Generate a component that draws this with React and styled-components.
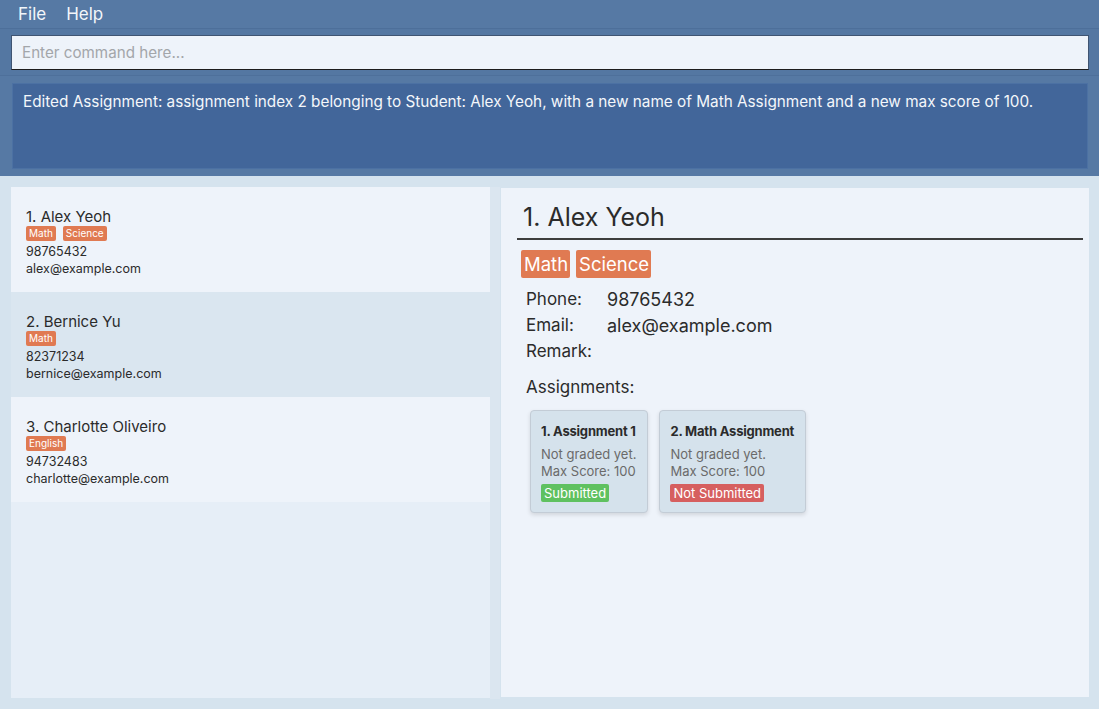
import React from 'react';
import styled, { createGlobalStyle } from 'styled-components';

const GlobalStyle = createGlobalStyle`
    html, body {
        margin: 0;
        padding: 0;
        background: #d5e3ee;
        font-family: Inter, "Noto Sans", sans-serif;
        color: #2b2b2b;
    }
`;

const Window = styled.div`
    width: 1099px;
    height: 709px;
    display: flex;
    flex-direction: column;
    background: #d5e3ee;
    overflow: hidden;
`;

const MenuBar = styled.div`
    height: 29px;
    display: flex;
    align-items: center;
    gap: 20px;
    padding-left: 18px;
    background: #5679a4;
    border-bottom: 1px solid #4d6f9a;
    box-sizing: border-box;
`;

const MenuItem = styled.span`
    color: #f2f6fa;
    font-size: 17px;
`;

const CommandSection = styled.div`
    height: 47px;
    padding: 6px 10px 6px 11px;
    box-sizing: border-box;
    background: #5477a2;
    border-bottom: 1px solid #4e709b;
`;

const CommandInput = styled.input`
    width: 100%;
    height: 35px;
    box-sizing: border-box;
    background: #eef3fa;
    border: 1px solid #3f5472;
    border-bottom-color: #1c1c1c;
    padding: 0 10px;
    font-family: Inter, "Noto Sans", sans-serif;
    font-size: 15.2px;
    color: #2b2b2b;
    outline: none;
    &::placeholder {
        color: #a3a6aa;
    }
`;

const ResultSection = styled.div`
    height: 100px;
    padding: 7px 11px 7px 12px;
    box-sizing: border-box;
    background: #5679a4;
`;

const ResultBox = styled.div`
    height: 86px;
    box-sizing: border-box;
    background: #42669a;
    border: 1px solid #4c71a3;
    padding: 7px 10px;
    color: #f4f7fb;
    font-size: 15.3px;
    line-height: 22px;
`;

const Main = styled.div`
    flex: 1;
    display: flex;
    padding: 11px 10px 10px 11px;
    min-height: 0;
`;

const ListPanel = styled.div`
    width: 479px;
    background: #e6eef7;
    display: flex;
    flex-direction: column;
    margin-bottom: 1px;
`;

const Divider = styled.div`
    width: 10px;
    background: #dbe6f0;
`;

const DetailPanel = styled.div`
    flex: 1;
    background: #eef3fa;
    margin: 1px 0 2px 1px;
    padding: 9px 6px 0 16px;
`;

const Cell = styled.div`
    height: 105px;
    box-sizing: border-box;
    padding: 20px 15px 0;
    background: ${p => (p.$alt ? '#dae6f0' : '#eef3fa')};
`;

const CellName = styled.div`
    font-size: 15px;
    line-height: 19px;
    color: #2b2b2b;
`;

const TagRow = styled.div`
    display: flex;
    gap: ${p => (p.$large ? '6px' : '7px')};
    margin: ${p => (p.$large ? '0 0 0 4px' : '0 0 2px')};
`;

const Tag = styled.span`
    background: #e07a52;
    color: #fff;
    border-radius: 2px;
    font-size: ${p => (p.$large ? '18.5px' : '10px')};
    line-height: ${p => (p.$large ? '28px' : '15px')};
    padding: ${p => (p.$large ? '0 2px 0 3px' : '0 3px')};
`;

const CellLine = styled.div`
    font-size: 12.5px;
    line-height: 17px;
    color: #2b2b2b;
`;

const Title = styled.div`
    font-size: 25px;
    line-height: 40px;
    padding-left: 6px;
    border-bottom: 2px solid #3d3d3d;
    height: 43px;
    box-sizing: border-box;
`;

const Tags = styled.div`
    margin-top: 10px;
`;

const InfoGrid = styled.div`
    display: grid;
    grid-template-columns: 81px auto;
    grid-auto-rows: 26px;
    margin: 8px 0 0 9px;
    font-size: 17px;
    align-items: center;
`;

const Label = styled.span`
    color: #2b2b2b;
`;

const Value = styled.span`
    font-size: 18px;
    color: #2b2b2b;
`;

const SectionLabel = styled.div`
    font-size: 17px;
    margin: 12px 0 0 9px;
    line-height: 22px;
`;

const CardRow = styled.div`
    display: flex;
    gap: 11px;
    margin: 12px 0 0 13px;
    align-items: flex-start;
`;

const Card = styled.div`
    background: #d5e2ec;
    border: 1px solid #c3ccd6;
    border-radius: 4px;
    box-shadow: 0 2px 4px rgba(0, 0, 0, 0.12);
    padding: 12px 11px 11px 10px;
    height: 103px;
    box-sizing: border-box;
    display: flex;
    flex-direction: column;
    align-items: flex-start;
`;

const CardTitle = styled.div`
    font-weight: 700;
    font-size: 13px;
    line-height: 17px;
    letter-spacing: -0.2px;
    color: #2b2b2b;
    margin-bottom: 6px;
`;

const CardLine = styled.div`
    font-size: 13px;
    line-height: 17px;
    color: #6a6a6a;
`;

const Status = styled.span`
    margin-top: 4px;
    background: ${p => (p.$done ? '#5fc160' : '#d65f5f')};
    color: #fff;
    font-size: 13px;
    line-height: 18px;
    padding: 0 3px;
    border-radius: 2px;
`;

const students = [
    { name: '1. Alex Yeoh', tags: ['Math', 'Science'], phone: '98765432', email: 'alex@example.com' },
    { name: '2. Bernice Yu', tags: ['Math'], phone: '82371234', email: 'bernice@example.com' },
    { name: '3. Charlotte Oliveiro', tags: ['English'], phone: '94732483', email: 'charlotte@example.com' },
];

const assignments = [
    { title: '1. Assignment 1', done: true },
    { title: '2. Math Assignment', done: false },
];

const App = () => (
    <>
        <GlobalStyle />
        <Window>
            <MenuBar>
                <MenuItem>File</MenuItem>
                <MenuItem>Help</MenuItem>
            </MenuBar>
            <CommandSection>
                <CommandInput placeholder="Enter command here..." />
            </CommandSection>
            <ResultSection>
                <ResultBox>
                    Edited Assignment: assignment index 2 belonging to Student: Alex Yeoh, with a new name of Math Assignment and a new max score of 100.
                </ResultBox>
            </ResultSection>
            <Main>
                <ListPanel>
                    {students.map((s, i) => (
                        <Cell key={s.name} $alt={i === 1}>
                            <CellName>{s.name}</CellName>
                            <TagRow>
                                {s.tags.map(t => <Tag key={t}>{t}</Tag>)}
                            </TagRow>
                            <CellLine>{s.phone}</CellLine>
                            <CellLine>{s.email}</CellLine>
                        </Cell>
                    ))}
                </ListPanel>
                <Divider />
                <DetailPanel>
                    <Title>1. Alex Yeoh</Title>
                    <Tags>
                        <TagRow $large>
                            <Tag $large>Math</Tag>
                            <Tag $large>Science</Tag>
                        </TagRow>
                    </Tags>
                    <InfoGrid>
                        <Label>Phone:</Label>
                        <Value>98765432</Value>
                        <Label>Email:</Label>
                        <Value>alex@example.com</Value>
                        <Label>Remark:</Label>
                        <Value />
                    </InfoGrid>
                    <SectionLabel>Assignments:</SectionLabel>
                    <CardRow>
                        {assignments.map(a => (
                            <Card key={a.title}>
                                <CardTitle>{a.title}</CardTitle>
                                <CardLine>Not graded yet.</CardLine>
                                <CardLine>Max Score: 100</CardLine>
                                <Status $done={a.done}>{a.done ? 'Submitted' : 'Not Submitted'}</Status>
                            </Card>
                        ))}
                    </CardRow>
                </DetailPanel>
            </Main>
        </Window>
    </>
);

export default App;
